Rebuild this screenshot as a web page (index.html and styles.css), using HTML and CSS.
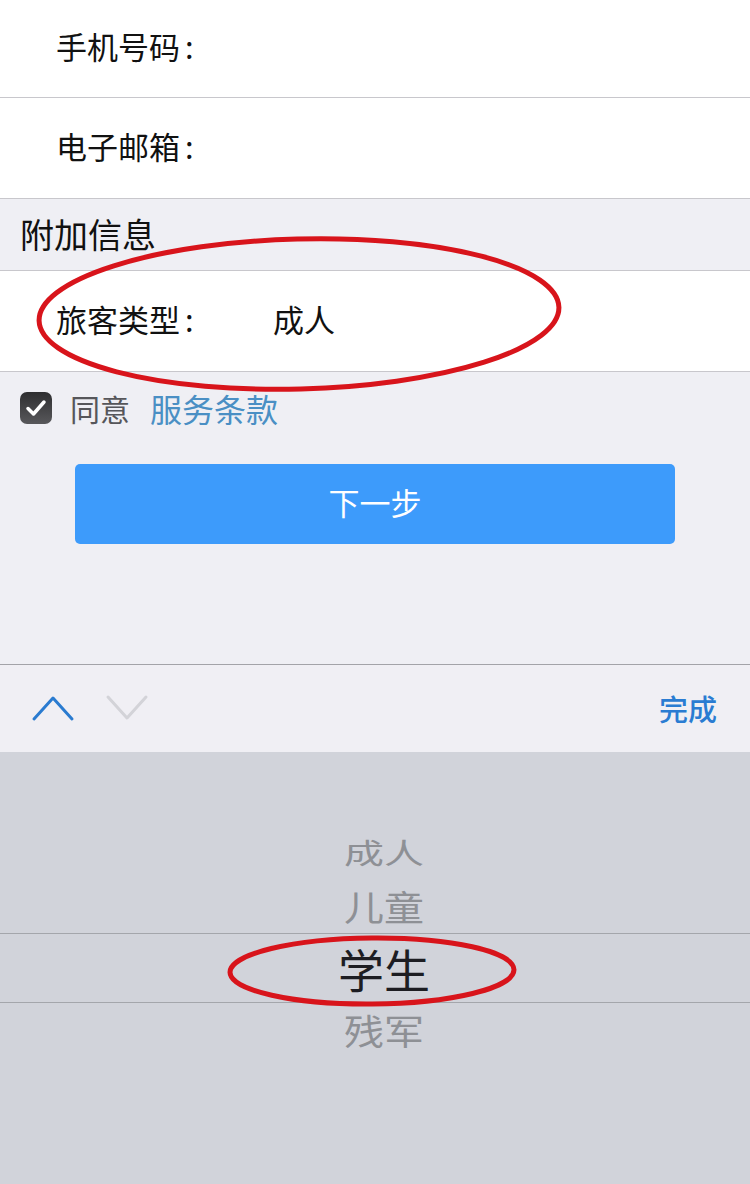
FILE: index.html
```html
<!DOCTYPE html>
<html lang="zh-CN">
<head>
<meta charset="utf-8">
<title>附加信息</title>
<link rel="stylesheet" href="styles.css">
</head>
<body>
<div class="page">
  <div class="form">
    <div class="field field-first"><span class="label">手机号码<i class="colon">:</i></span></div>
    <div class="field"><span class="label">电子邮箱<i class="colon">:</i></span></div>
    <div class="section-title">附加信息</div>
    <div class="field field-type"><span class="label">旅客类型<i class="colon">:</i></span><span class="value">成人</span></div>
  </div>

  <div class="agree">
    <span class="checkbox">
      <svg viewBox="0 0 32 32" width="32" height="32"><path d="M8 16.5 L13.5 22 L24 10" fill="none" stroke="#fff" stroke-width="3.5" stroke-linecap="round" stroke-linejoin="round"/></svg>
    </span>
    <span class="agree-text">同意</span>
    <a class="terms">服务条款</a>
  </div>

  <div class="actions">
    <button class="next">下一步</button>
  </div>

  <div class="toolbar">
    <div class="arrows">
      <svg class="arrow" viewBox="0 0 44 28" width="44" height="28"><path d="M3 25 L22 4 L41 25" fill="none" stroke="#2a7bd0" stroke-width="3" stroke-linecap="round" stroke-linejoin="round"/></svg>
      <svg class="arrow" viewBox="0 0 44 28" width="44" height="28"><path d="M3 3 L22 24 L41 3" fill="none" stroke="#d3d3d8" stroke-width="3" stroke-linecap="round" stroke-linejoin="round"/></svg>
    </div>
    <span class="done">完成</span>
  </div>

  <div class="picker">
    <div class="item item-far">成人</div>
    <div class="item item-near">儿童</div>
    <div class="item item-selected">学生</div>
    <div class="item item-near">残军</div>
  </div>

  <svg class="marks" viewBox="0 0 750 1184" width="750" height="1184">
    <ellipse cx="299" cy="314" rx="260" ry="75" transform="rotate(-1.5 299 314)" fill="none" stroke="#d8141b" stroke-width="5"/>
    <ellipse cx="372" cy="971" rx="142" ry="33" transform="rotate(-0.5 372 971)" fill="none" stroke="#d8141b" stroke-width="5"/>
  </svg>
</div>
</body>
</html>
```

FILE: styles.css
```css
html, body {
  margin: 0;
  padding: 0;
}

body {
  width: 750px;
  height: 1184px;
  overflow: hidden;
  background: #efeff4;
  font-family: "Noto Sans CJK SC", "Noto Sans", sans-serif;
  color: #111;
}

.page {
  position: relative;
  width: 750px;
  height: 1184px;
  display: flex;
  flex-direction: column;
}

/* form rows */
.form {
  display: flex;
  flex-direction: column;
}

.field {
  height: 94px;
  padding: 0 0 6px 56px;
  box-sizing: content-box;
  background: #fff;
  border-bottom: 1px solid #c8c7cc;
  display: flex;
  align-items: center;
  font-size: 31px;
}

.field-first {
  height: 91px;
}

.label {
  width: 217px;
}

.colon {
  font-style: normal;
  margin-left: 5px;
}

.value {
  color: #111;
}

.section-title {
  height: 72px;
  display: flex;
  align-items: center;
  padding-left: 20px;
  font-size: 34px;
  color: #111;
  border-bottom: 1px solid #c8c7cc;
  box-sizing: border-box;
  padding-bottom: 2px;
}

/* agreement */
.agree {
  height: 76px;
  display: flex;
  align-items: center;
  padding-left: 20px;
  padding-bottom: 4px;
  box-sizing: border-box;
  font-size: 30px;
}

.checkbox {
  width: 32px;
  height: 32px;
  border-radius: 7px;
  background: linear-gradient(180deg, #2e2e30 0%, #58585b 100%);
  display: flex;
  align-items: center;
  justify-content: center;
  margin-right: 18px;
}

.checkbox svg {
  display: block;
}

.agree-text {
  color: #56565a;
  margin-right: 20px;
}

.terms {
  color: #4a8fc4;
  font-size: 32px;
}

/* button */
.actions {
  padding: 16px 0 0 75px;
  height: 216px;
  box-sizing: border-box;
}

.next {
  width: 600px;
  height: 80px;
  border: none;
  border-radius: 5px;
  background: #3d9bfb;
  color: #fff;
  font-family: inherit;
  font-size: 31px;
  padding: 0 0 6px;
}

/* keyboard accessory bar */
.toolbar {
  height: 87px;
  border-top: 1px solid #a3a3a8;
  background: #f0eff4;
  display: flex;
  align-items: center;
  justify-content: space-between;
  padding: 0 33px 0 31px;
}

.arrows {
  display: flex;
  gap: 30px;
  align-items: center;
  padding-bottom: 2px;
}

.arrow {
  display: block;
}

.done {
  color: #2a7cd2;
  font-size: 29px;
  font-weight: 500;
  padding-bottom: 2px;
}

/* picker wheel */
.picker {
  flex: 1;
  background: #d1d3da;
  padding-top: 73px;
  display: flex;
  flex-direction: column;
  align-items: stretch;
}

.item {
  height: 54px;
  display: flex;
  align-items: center;
  justify-content: center;
  color: #8e9095;
  font-size: 40px;
  padding-left: 18px;
}

.item-far {
  transform: scaleY(0.72);
}

.item-near {
  transform: scaleY(0.88);
}

.item-selected {
  height: 68px;
  border-top: 1px solid #a4a6ab;
  border-bottom: 1px solid #a4a6ab;
  color: #1d1d22;
  font-size: 46px;
}

/* hand-drawn highlight rings on top */
.marks {
  position: absolute;
  left: 0;
  top: 0;
  pointer-events: none;
}
```
